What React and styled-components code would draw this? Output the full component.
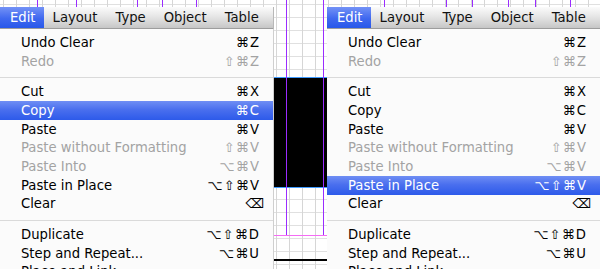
import React from 'react';
import styled, { createGlobalStyle } from 'styled-components';

const Global = createGlobalStyle`
  html, body { margin: 0; padding: 0; }
  body { width: 600px; height: 269px; overflow: hidden; background: #fff; }
`;

const Page = styled.div`
  position: relative;
  width: 600px;
  height: 269px;
  overflow: hidden;
  box-sizing: border-box;
  padding-top: 7px;
  display: flex;
  align-items: flex-start;
  background-color: #fff;
  background-image:
    linear-gradient(to right, #d6d6d6 1px, transparent 1px),
    linear-gradient(to bottom, #e0e0e0 1px, transparent 1px);
  background-size: 13px 13px;
  background-position: 3px 0, 0 4px;
  font-family: "DejaVu Sans", "Liberation Sans", sans-serif;
`;

const GuideV = styled.div`
  position: absolute;
  top: 0;
  width: 1px;
  height: 235px;
  background: #9a2cff;
  z-index: 1;
`;

const Block = styled.div`
  position: absolute;
  left: 273px;
  top: 77px;
  width: 54px;
  height: 111px;
  box-sizing: border-box;
  background: #000;
  border-top: 1px solid #3f9bff;
  border-bottom: 1px solid #3f9bff;
`;

const HLine = styled.div`
  position: absolute;
  left: 273px;
  width: 54px;
  top: ${(p) => p.$top}px;
  height: ${(p) => p.$h}px;
  background: ${(p) => p.$color};
`;

const Menu = styled.div`
  position: relative;
  z-index: 2;
  width: 273px;
  display: flex;
  flex-direction: column;
`;

const Spacer = styled.div`
  width: 54px;
  flex: none;
`;

const MenuBar = styled.div`
  height: 22px;
  display: flex;
  align-items: stretch;
  background: linear-gradient(#fbfbfb, #e6e6e6 45%, #d2d2d2 80%, #c6c6c6);
  border-bottom: 1px solid #9d9d9d;
  box-sizing: border-box;
  box-shadow: 1px 0 0 #b8b8b8;
`;

const MenuTitle = styled.div`
  padding: 0 9px 0 ${(p) => (p.$first ? 10 : 9)}px;
  font-size: 13.2px;
  line-height: 22px;
  color: ${(p) => (p.$active ? '#fff' : '#111')};
  background: ${(p) =>
    p.$active ? 'linear-gradient(#7392f6, #3f68ef 55%, #2858ea)' : 'transparent'};
  ${(p) => (p.$active ? 'padding-right: 8px;' : '')}
`;

const Dropdown = styled.div`
  background: #fbfbfb;
  padding-top: 4px;
  height: 260px;
  box-shadow: 1px 0 0 #cfcfcf;
`;

const Item = styled.div`
  height: 18.7px;
  display: flex;
  align-items: center;
  justify-content: space-between;
  padding: 0 14px 0 21px;
  font-size: 13.2px;
  color: ${(p) => (p.$hl ? '#fff' : p.$disabled ? '#a3a3a3' : '#000')};
  background: ${(p) =>
    p.$hl ? 'linear-gradient(#6f8ef4, #4a6fee 45%, #2d5aea)' : 'transparent'};
  white-space: nowrap;
`;

const Shortcut = styled.span`
  letter-spacing: 1px;
  margin-right: ${(p) => (p.$wide ? -6 : -1)}px;
`;

const Separator = styled.div`
  height: 12px;
  box-sizing: border-box;
  padding-top: 7px;
  &::after {
    content: '';
    display: block;
    height: 1px;
    background: #dadada;
  }
`;

const titles = ['Edit', 'Layout', 'Type', 'Object', 'Table'];

const items = [
  { label: 'Undo Clear', key: '⌘Z' },
  { label: 'Redo', key: '⇧⌘Z', disabled: true },
  { sep: true },
  { label: 'Cut', key: '⌘X' },
  { label: 'Copy', key: '⌘C', id: 'copy' },
  { label: 'Paste', key: '⌘V' },
  { label: 'Paste without Formatting', key: '⇧⌘V', disabled: true },
  { label: 'Paste Into', key: '⌥⌘V', disabled: true },
  { label: 'Paste in Place', key: '⌥⇧⌘V', id: 'pip' },
  { label: 'Clear', key: '⌫', wide: true },
  { sep: true },
  { label: 'Duplicate', key: '⌥⇧⌘D' },
  { label: 'Step and Repeat...', key: '⌥⌘U' },
  { label: 'Place and Link', key: '' },
];

function EditMenu({ highlight }) {
  return (
    <Menu>
      <MenuBar>
        {titles.map((t, i) => (
          <MenuTitle key={t} $active={i === 0} $first={i === 0}>
            {t}
          </MenuTitle>
        ))}
      </MenuBar>
      <Dropdown>
        {items.map((it, i) =>
          it.sep ? (
            <Separator key={i} />
          ) : (
            <Item key={i} $disabled={it.disabled} $hl={it.id === highlight}>
              <span>{it.label}</span>
              <Shortcut $wide={it.wide}>{it.key}</Shortcut>
            </Item>
          )
        )}
      </Dropdown>
    </Menu>
  );
}

const guides = [37, 76, 137, 162, 196, 286, 323, 384, 446, 472, 508, 535, 570];

export default function App() {
  return (
    <>
      <Global />
      <Page>
        <Block />
        {guides.map((x) => (
          <GuideV key={x} style={{ left: x }} />
        ))}
        <HLine $top={235} $h={1} $color="#f46cf4" />
        <HLine $top={259} $h={2} $color="#000" />
        <EditMenu highlight="copy" />
        <Spacer />
        <EditMenu highlight="pip" />
      </Page>
    </>
  );
}
